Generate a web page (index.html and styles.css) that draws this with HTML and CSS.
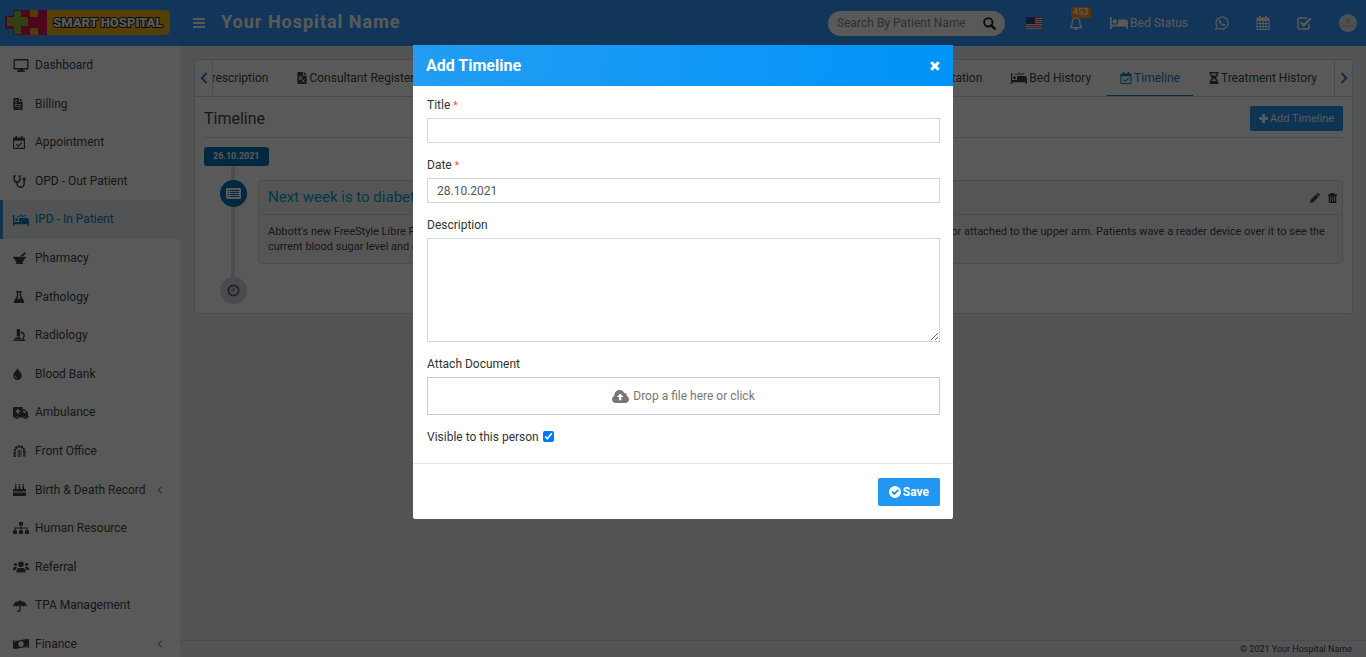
FILE: index.html
```html
<!DOCTYPE html>
<html lang="en">
    <head>
        <meta charset="UTF-8">
        <meta name="viewport" content="width=device-width, initial-scale=1">
        <title>Your Hospital Name</title>
        <link rel="stylesheet" href="styles.css">
    </head>
    <body>
        <!-- icon sprite -->
        <svg class="sprite" aria-hidden="true">
            <symbol id="i-bars" viewBox="0 0 12 12"><path d="M0 1h12v2H0zM0 5h12v2H0zM0 9h12v2H0z"/></symbol>
            <symbol id="i-search" viewBox="0 0 13 13"><circle cx="5.3" cy="5.3" r="4.2" fill="none" stroke="currentColor" stroke-width="1.9"/><path d="M8.3 8.3l3.600 3.600" stroke="currentColor" stroke-width="2.300" stroke-linecap="round"/></symbol>
            <symbol id="i-bell" viewBox="0 0 14 15"><path d="M7 1.800c-2.600 0-3.700 1.900-3.700 4.200 0 3-.8 4.500-2 5.600h11.400c-1.200-1.100-2-2.600-2-5.600 0-2.300-1.100-4.200-3.700-4.200z" fill="none" stroke="currentColor" stroke-width="1.300" stroke-linejoin="round"/><path d="M6.400 0h1.200v2H6.400zM5 12h4a2 2 0 0 1-4 0z"/></symbol>
            <symbol id="i-bed" viewBox="0 0 18 12"><path d="M0 0h1.800v7.400H8V2.400h7.300A2.700 2.700 0 0 1 18 5.100V12h-1.800V9.600H1.800V12H0z"/><circle cx="4.800" cy="4.400" r="2.200"/></symbol>
            <symbol id="i-whatsapp" viewBox="0 0 14 14"><path d="M.9 13.100l.9-3.200A6 6 0 1 1 4.100 12.200z" fill="none" stroke="currentColor" stroke-width="1.300"/><path d="M4.900 3.500c-.9.600-1.100 1.500-.8 2.400.8 2.100 2.300 3.500 4.300 4.200 1 .2 2-.5 2.100-1.600L8.700 7.600l-.8.900C6.900 8.100 6.100 7.300 5.600 6.300l.6-.8z"/></symbol>
            <symbol id="i-calendar" viewBox="0 0 14 14"><path fill-rule="evenodd" d="M3 0h1.800v1.500h4.400V0H11v1.500h1.500c.6 0 1 .4 1 1V13c0 .6-.4 1-1 1h-11c-.6 0-1-.4-1-1V2.500c0-.6.4-1 1-1H3zM1.500 5v2h2.300V5zm3.200 0v2h1.900V5zm2.800 0v2h1.900V5zm2.800 0v2h2.200V5zM1.500 8v2h2.300V8zm3.200 0v2h1.900V8zm2.800 0v2h1.900V8zm2.800 0v2h2.200V8zM1.500 11v2h2.300v-2zm3.200 0v2h1.900v-2zm2.800 0v2h1.900v-2zm2.800 0v2h2.200v-2z"/></symbol>
            <symbol id="i-checksquare" viewBox="0 0 15 14"><path d="M12 8v3.200c0 1-.8 1.800-1.800 1.800H2.800C1.800 13 1 12.200 1 11.200V3.800C1 2.800 1.800 2 2.800 2h7.400" fill="none" stroke="currentColor" stroke-width="1.500"/><path d="M3.800 6.300l3 3L13.600 2.500" fill="none" stroke="currentColor" stroke-width="2.300"/></symbol>
            <symbol id="i-desktop" viewBox="0 0 16 13"><path d="M1.200.7h13.600v9H1.200z" fill="none" stroke="currentColor" stroke-width="1.400" stroke-linejoin="round"/><path d="M6 9.500h4l.4 2H12V13H4v-1.500h1.600z"/></symbol>
            <symbol id="i-file" viewBox="0 0 10 13"><path fill-rule="evenodd" d="M0 1c0-.6.400-1 1-1h5v4h4v8c0 .6-.4 1-1 1H1c-.6 0-1-.4-1-1zM1.600 2v1h2.600V2zm0 2v1h2.600V4zM2 6.500V9.500h6v-3zm.8.8h4.400v1.400H2.800zM5.500 10.700v1H8v-1zM7 0l3 3H7z"/></symbol>
            <symbol id="i-rx" viewBox="0 0 10 13"><path d="M0 1c0-.6.400-1 1-1h5v4h4v8c0 .6-.4 1-1 1H1c-.6 0-1-.4-1-1zM7 0l3 3H7z"/><path d="M2.500 9V4.800h1.700a1.200 1.200 0 0 1 0 2.400H2.500m1.700 0l3.800 4M8 7.800l-3.300 3.400" class="cut"/></symbol>
            <symbol id="i-calcheck" viewBox="0 0 12 13"><path fill-rule="evenodd" d="M2.500 0h1.600v1.500h3.800V0h1.600v1.500h1.200c.7 0 1.300.5 1.300 1.200v9c0 .7-.6 1.300-1.300 1.300H1.300C.6 13 0 12.400 0 11.700v-9c0-.7.6-1.200 1.300-1.200h1.200zM1.200 4.700v7.100h9.600V4.700z"/><path d="M3.400 8.200l1.900 1.900 3.500-3.500" fill="none" stroke="currentColor" stroke-width="1.200"/></symbol>
            <symbol id="i-steth" viewBox="0 0 13 13"><path d="M2.800.9H1.200v3.300a2.900 2.900 0 0 0 5.800 0V.9H5.500M4.100 7.200v1.500a3.500 3.500 0 0 0 7 0V5" fill="none" stroke="currentColor" stroke-width="1.500"/><circle cx="11.100" cy="3.900" r="1.700"/></symbol>
            <symbol id="i-procedure" viewBox="0 0 16 12"><path d="M0 1h1.300v7H6V4h7.200A2.500 2.500 0 0 1 16 6.500V12h-1.400v-1.800H1.300V12H0z"/><circle cx="3.600" cy="5.700" r="1.500"/><path d="M4 2.300h3l1-1.700 1.400 2.700 1-1.500H13" fill="none" stroke="currentColor" stroke-width=".9"/></symbol>
            <symbol id="i-mortar" viewBox="0 0 13 12"><path d="M0 4.700h13v1.400h-1a5.300 5.300 0 0 1-2.600 3.800l.8 2.100H2.800l.8-2.100A5.300 5.300 0 0 1 1 6.100H0zM7 4.200L11.600.3c.8-.4 1.600.5 1 1.200L10 4.200z"/></symbol>
            <symbol id="i-flask" viewBox="0 0 12 13"><path fill-rule="evenodd" d="M3 0h6v1.500h-.7v3.700l3.300 5.800c.5.9-.1 2-1.100 2h-9c-1 0-1.600-1.100-1.100-2l3.300-5.800V1.500H3zm2.200 1.500v4.200L3.900 8h4.200L6.800 5.700V1.500z"/></symbol>
            <symbol id="i-microscope" viewBox="0 0 13 13"><path d="M4 0h2.800v1h.4v6.500H3.500V1H4zM3.700 8.100H7v1.300H3.700zM0 11.500h12.500V13H0z"/><path d="M8 3.800c2 0 3.500 1.500 3.500 3.500 0 1.900-1.200 3.300-2 4.400M1.500 10.200H8" fill="none" stroke="currentColor" stroke-width="1.400"/></symbol>
            <symbol id="i-drop" viewBox="0 0 9 13"><path d="M4.500 0C5.300 2.700 9 4.900 9 8.400a4.500 4.500 0 0 1-9 0C0 4.900 3.700 2.700 4.500 0z"/><path d="M2 8.500c.1 1.400.9 2.200 2.300 2.400" class="cut"/></symbol>
            <symbol id="i-ambulance" viewBox="0 0 16 12"><path fill-rule="evenodd" d="M1 0h8.500v2.300h2L15 5.500v3.700h1v1.200H1a1 1 0 0 1-1-1V1a1 1 0 0 1 1-1zm3.200 2v1.600H2.700v1.500h1.500v1.600h1.500V5.100h1.500V3.600H5.700V2zM10.200 3.300v2.400h3.200l-2.400-2.400z"/><circle cx="4" cy="10" r="1.900"/><circle cx="12.300" cy="10" r="1.900"/><path d="M3.500 9.500h1v1h-1zM11.800 9.500h1v1h-1z" fill="#fff"/></symbol>
            <symbol id="i-gate" viewBox="0 0 13 13"><path d="M1.300 13V6.700a5.200 5.200 0 0 1 10.400 0V13" fill="none" stroke="currentColor" stroke-width="2.600" stroke-dasharray="2.400 .7"/><path d="M4.500 5.500h.9V13h-.9zM6.100 4.800H7V13h-.9zM7.700 5.500h.9V13h-.9z"/></symbol>
            <symbol id="i-cake" viewBox="0 0 13 12"><path d="M2 2h1.500v3H2zM5.700 2h1.500v3H5.700zM9.500 2H11v3H9.500zM2 0h1.300v1.400H2zM5.700 0H7v1.400H5.700zM9.500 0h1.300v1.400H9.500zM1 5h11c.5 0 1 .4 1 1v1c-2 1.500-2.600.5-3.300.1C8.500 8.500 7.300 8.100 6.500 7.100c-1 1.200-2.200 1.200-3.200 0C2 8.200.8 8 0 7V6c0-.6.500-1 1-1zM0 8.300c1.300.7 2.400.6 3.300 0 1 .7 2.200.7 3.200 0 1 .7 2.100.7 3.200 0 1 .6 2 .7 3.300 0V12H0z"/></symbol>
            <symbol id="i-sitemap" viewBox="0 0 16 12"><path d="M6 0h4v3.500H6zM0 8.500h4V12H0zM6 8.500h4V12H6zM12 8.500h4V12h-4zM7.400 3h1.200v6H7.400zM1.400 5.400h13.200V9h-1.200V6.600H2.600V9H1.400z"/></symbol>
            <symbol id="i-users" viewBox="0 0 16 12"><circle cx="8" cy="3.300" r="2.800"/><circle cx="2.500" cy="3.500" r="1.600"/><circle cx="13.500" cy="3.500" r="1.600"/><path d="M3.500 11.500V9.800C3.500 8 4.600 6.900 6 6.900h4c1.400 0 2.500 1.100 2.500 2.900v1.700zM0 8.300C0 6.800.8 6 1.800 6h1.500l.9.700C3.200 7.400 2.900 8.200 2.800 9H0zM16 8.300C16 6.800 15.200 6 14.200 6h-1.500l-.9.700c1 .7 1.300 1.500 1.400 2.300H16z"/></symbol>
            <symbol id="i-umbrella" viewBox="0 0 14 12"><path d="M0 6.500C.5 3.200 3.200 1.200 6.400 1V0h1.200v1c3.200.2 5.900 2.200 6.400 5.500-1.500-1.100-2.800-.9-3.700.2C9 5.300 8.500 5.100 7 6.300 5.500 5.100 5 5.300 3.700 6.700 2.800 5.600 1.500 5.400 0 6.500z"/><path d="M7 5.500v4.700c0 1.500-2.600 1.500-2.600 0" fill="none" stroke="currentColor" stroke-width="1.300"/></symbol>
            <symbol id="i-money" viewBox="0 0 16 12"><path fill-rule="evenodd" d="M0 2c3 1.600 5 .6 8 .1S13.500.3 16 1.200V10c-3-1.600-5-.5-8 0s-5.500 1.500-8 .5zM8 3.300a2.600 2.800 0 1 0 0 5.600 2.600 2.800 0 0 0 0-5.600z"/><path d="M1.200 3.600l1.400.3M14.800 8.300l-1.400-.3" class="cut"/></symbol>
            <symbol id="i-hourglass" viewBox="0 0 10 13"><path fill-rule="evenodd" d="M0 0h10v1.600h-.7c0 2.300-.8 3.900-2.300 4.900 1.500 1 2.300 2.600 2.300 4.900h.7V13H0v-1.600h.7c0-2.300.8-3.900 2.300-4.900C1.500 5.500.7 3.900.7 1.600H0zM2.200 1.600c0 .9.200 1.500.5 2.200h4.600c.3-.7.5-1.300.5-2.200zM5 7.300c-1.200.5-2 1.300-2.400 2.500h4.800C7 8.600 6.200 7.800 5 7.300z"/></symbol>
            <symbol id="i-left" viewBox="0 0 8 12"><path d="M6.500 1L1.800 6l4.700 5" fill="none" stroke="currentColor" stroke-width="2"/></symbol>
            <symbol id="i-right" viewBox="0 0 8 12"><path d="M1.500 1l4.700 5-4.700 5" fill="none" stroke="currentColor" stroke-width="2"/></symbol>
            <symbol id="i-angle" viewBox="0 0 6 8"><path d="M4.500 1L1.300 4l3.200 3" fill="none" stroke="currentColor"/></symbol>
            <symbol id="i-plus" viewBox="0 0 9 9"><path d="M3 0h3v3h3v3H6v3H3V6H0V3h3z"/></symbol>
            <symbol id="i-list" viewBox="0 0 15 11"><path d="M1 0h13a1 1 0 0 1 1 1v9a1 1 0 0 1-1 1H1a1 1 0 0 1-1-1V1a1 1 0 0 1 1-1z"/><path d="M2 2h1v1H2zM4 2h9v1H4zM2 4h1v1H2zM4 4h9v1H4zM2 6h1v1H2zM4 6h9v1H4zM2 8h1v1H2zM4 8h9v1H4z" fill="#0073b7"/></symbol>
            <symbol id="i-clock" viewBox="0 0 13 13"><circle cx="6.500" cy="6.500" r="5.200" fill="none" stroke="currentColor" stroke-width="1.800"/><path d="M6.800 3.500v3.300H4.200" fill="none" stroke="currentColor" stroke-width="1.100"/></symbol>
            <symbol id="i-pencil" viewBox="0 0 10 10"><path d="M0 10l.7-3.100L6 1.600 8.400 4 3.100 9.300zM6.600 1L7.400.3c.4-.4.900-.4 1.200 0l1.100 1.100c.4.3.4.8 0 1.200l-.7.800z"/></symbol>
            <symbol id="i-trash" viewBox="0 0 9 10"><path fill-rule="evenodd" d="M3 0h3l.6 1.300H9v1.200h-.7V9c0 .6-.4 1-1 1H1.700c-.6 0-1-.4-1-1V2.500H0V1.300h2.400zM2.200 3.500v5h.7v-5zm2 0v5h.7v-5zm2 0v5h.7v-5z"/></symbol>
            <symbol id="i-times" viewBox="0 0 10 10"><path d="M1.300 1.300l7.400 7.400M8.700 1.300L1.300 8.700" stroke="currentColor" stroke-width="3"/></symbol>
            <symbol id="i-cloud" viewBox="0 0 17 13"><path fill-rule="evenodd" d="M4 13C1.700 13 0 11.400 0 9.300 0 7.700 1 6.400 2.300 5.800 2.100 2.600 4.500 0 7.500 0c2.100 0 3.900 1.200 4.700 2.900 1.700-.2 3.100 1.300 2.600 3C16.200 6.500 17 7.900 17 9.400c0 2-1.600 3.600-3.600 3.600zM8.200 3.600L4.900 7h2.200v3.300h2.200V7h2.200z"/></symbol>
            <symbol id="i-checkcircle" viewBox="0 0 12 12"><path fill-rule="evenodd" d="M6 0a6 6 0 1 1 0 12A6 6 0 0 1 6 0zM2.300 6.300l3 2.900 4.700-4.600-1.300-1.300L5.300 6.600 3.600 5z"/></symbol>
        </svg>

        <header class="topbar">
            <a class="logo" href="#">
                <svg width="166" height="26" viewBox="0 0 166 26">
                    <rect x="30" y="0" width="135" height="25" rx="5" fill="#f9b30b"/>
                    <path d="M8 0h34v25H8v-6H0V6h8z" fill="#e0125a"/>
                    <path d="M9 1h7v6h7v9h-7v8H9v-8H2V7h7z" fill="#8fb83a"/>
                    <path d="M25 0h8v7h-8zM25 18h8v7h-8z" fill="#f9a70b"/>
                    <text class="logo-text" x="48" y="17">SMART HOSPITAL</text>
                </svg>
            </a>
            <button class="toggle" type="button" aria-label="Toggle menu"><svg class="icon" width="12" height="12"><use href="#i-bars"/></svg></button>
            <span class="hospital">Your Hospital Name</span>
            <form class="search">
                <input type="text" placeholder="Search By Patient Name" aria-label="Search By Patient Name">
                <button type="submit" aria-label="Search"><svg class="icon" width="13" height="13"><use href="#i-search"/></svg></button>
            </form>
            <nav class="tools">
                <a href="#" aria-label="Language">
                    <svg width="16" height="12" viewBox="0 0 16 12">
                        <path d="M0 0h16v12H0z" fill="#eee"/>
                        <path d="M0 0h16v1H0zM0 2h16v1H0zM0 4h16v1H0zM0 6h16v1H0zM0 8h16v1H0zM0 10h16v1H0z" fill="#d8424c"/>
                        <path d="M0 0h9v7H0z" fill="#34477e"/>
                    </svg>
                </a>
                <a class="bell" href="#" aria-label="Notifications"><svg class="icon" width="14" height="15"><use href="#i-bell"/></svg><span class="badge">453</span></a>
                <a class="beds" href="#"><svg class="icon" width="18" height="12"><use href="#i-bed"/></svg>Bed Status</a>
                <a href="#" aria-label="Chat"><svg class="icon" width="14" height="14"><use href="#i-whatsapp"/></svg></a>
                <a href="#" aria-label="Calendar"><svg class="icon" width="14" height="14"><use href="#i-calendar"/></svg></a>
                <a href="#" aria-label="Tasks"><svg class="icon" width="15" height="14"><use href="#i-checksquare"/></svg></a>
                <a href="#" aria-label="Profile">
                    <svg width="18" height="18" viewBox="0 0 18 18"><circle cx="9" cy="9" r="9" fill="#e4e4e4"/><circle cx="9" cy="7" r="2.500" fill="#c4c4c4"/><path d="M3 11h12v2H3z" fill="#cfcfcf"/></svg>
                </a>
            </nav>
        </header>

        <div class="wrapper">
            <aside class="sidebar">
                <ul class="menu">
                    <li><a href="#"><span><svg class="icon" width="16" height="13"><use href="#i-desktop"/></svg></span>Dashboard</a></li>
                    <li><a href="#"><span><svg class="icon" width="10" height="12"><use href="#i-file"/></svg></span>Billing</a></li>
                    <li><a href="#"><span><svg class="icon" width="12" height="13"><use href="#i-calcheck"/></svg></span>Appointment</a></li>
                    <li><a href="#"><span><svg class="icon" width="13" height="13"><use href="#i-steth"/></svg></span>OPD - Out Patient</a></li>
                    <li class="active"><a href="#"><span><svg class="icon" width="16" height="12"><use href="#i-procedure"/></svg></span>IPD - In Patient</a></li>
                    <li><a href="#"><span><svg class="icon" width="13" height="12"><use href="#i-mortar"/></svg></span>Pharmacy</a></li>
                    <li><a href="#"><span><svg class="icon" width="12" height="12"><use href="#i-flask"/></svg></span>Pathology</a></li>
                    <li><a href="#"><span><svg class="icon" width="13" height="12"><use href="#i-microscope"/></svg></span>Radiology</a></li>
                    <li><a href="#"><span><svg class="icon" width="9" height="12"><use href="#i-drop"/></svg></span>Blood Bank</a></li>
                    <li><a href="#"><span><svg class="icon" width="16" height="12"><use href="#i-ambulance"/></svg></span>Ambulance</a></li>
                    <li><a href="#"><span><svg class="icon" width="13" height="12"><use href="#i-gate"/></svg></span>Front Office</a></li>
                    <li><a href="#"><span><svg class="icon" width="13" height="12"><use href="#i-cake"/></svg></span>Birth &amp; Death Record<svg class="icon angle" width="6" height="8"><use href="#i-angle"/></svg></a></li>
                    <li><a href="#"><span><svg class="icon" width="16" height="12"><use href="#i-sitemap"/></svg></span>Human Resource</a></li>
                    <li><a href="#"><span><svg class="icon" width="16" height="12"><use href="#i-users"/></svg></span>Referral</a></li>
                    <li><a href="#"><span><svg class="icon" width="14" height="12"><use href="#i-umbrella"/></svg></span>TPA Management</a></li>
                    <li><a href="#"><span><svg class="icon" width="16" height="12"><use href="#i-money"/></svg></span>Finance<svg class="icon angle" width="6" height="8"><use href="#i-angle"/></svg></a></li>
                </ul>
            </aside>

            <div class="content">
                <main class="box">
                    <div class="tabs">
                        <button class="scroll" type="button" aria-label="Previous tabs"><svg class="icon" width="8" height="12"><use href="#i-left"/></svg></button>
                        <nav class="tablist">
                            <div class="tabgroup first">
                                <a href="#">Prescription</a>
                                <a href="#"><svg class="icon" width="10" height="12"><use href="#i-rx"/></svg>Consultant Register</a>
                            </div>
                            <div class="tabgroup">
                                <a href="#">Live Consultation</a>
                                <a href="#"><svg class="icon" width="16" height="12"><use href="#i-procedure"/></svg>Bed History</a>
                                <a class="active" href="#"><svg class="icon" width="12" height="12"><use href="#i-calcheck"/></svg>Timeline</a>
                                <a href="#"><svg class="icon" width="10" height="12"><use href="#i-hourglass"/></svg>Treatment History</a>
                            </div>
                        </nav>
                        <button class="scroll next" type="button" aria-label="Next tabs"><svg class="icon" width="8" height="12"><use href="#i-right"/></svg></button>
                    </div>
                    <div class="pane">
                        <div class="pane-head">
                            <h3>Timeline</h3>
                            <button class="btn small" type="button"><svg class="icon" width="9" height="9"><use href="#i-plus"/></svg>Add Timeline</button>
                        </div>
                        <ul class="timeline">
                            <li class="day"><span class="date">26.10.2021</span></li>
                            <li class="entry">
                                <span class="dot"><svg class="icon" width="15" height="11"><use href="#i-list"/></svg></span>
                                <article class="card">
                                    <div class="card-head">
                                        <h4>Next week is to diabetic checkup</h4>
                                        <a href="#" aria-label="Edit"><svg class="icon" width="10" height="10"><use href="#i-pencil"/></svg></a>
                                        <a href="#" aria-label="Delete"><svg class="icon" width="9" height="10"><use href="#i-trash"/></svg></a>
                                    </div>
                                    <p>Abbott's new FreeStyle Libre Flash Glucose Monitoring System approved Wednesday by the Food and Drug Administration uses a small sensor attached to the upper arm. Patients wave a reader device over it to see the current blood sugar level and changes over the past eight hours.</p>
                                </article>
                            </li>
                            <li class="entry"><span class="dot end"><svg class="icon" width="13" height="13"><use href="#i-clock"/></svg></span></li>
                        </ul>
                    </div>
                </main>
                <footer class="footer">© 2021 Your Hospital Name</footer>
            </div>
        </div>

        <div class="backdrop">
            <form class="modal" role="dialog" aria-labelledby="modal-title">
                <div class="modal-head">
                    <h2 id="modal-title">Add Timeline</h2>
                    <button type="button" aria-label="Close"><svg class="icon" width="10" height="10"><use href="#i-times"/></svg></button>
                </div>
                <div class="modal-body">
                    <div class="field">
                        <label for="title">Title <small>*</small></label>
                        <input id="title" type="text">
                    </div>
                    <div class="field">
                        <label for="date">Date <small>*</small></label>
                        <input id="date" type="text" value="28.10.2021">
                    </div>
                    <div class="field">
                        <label for="description">Description</label>
                        <textarea id="description"></textarea>
                    </div>
                    <div class="field">
                        <label for="document">Attach Document</label>
                        <label class="drop" for="document"><svg class="icon" width="17" height="13"><use href="#i-cloud"/></svg>Drop a file here or click</label>
                        <input id="document" type="file" hidden>
                    </div>
                    <div class="check">
                        <label for="visible">Visible to this person</label>
                        <input id="visible" type="checkbox" checked>
                    </div>
                </div>
                <div class="modal-foot">
                    <button class="btn" type="submit"><svg class="icon" width="12" height="12"><use href="#i-checkcircle"/></svg>Save</button>
                </div>
            </form>
        </div>
    </body>
</html>
```
FILE: styles.css
```css
* {
    box-sizing: border-box;
}
body {
    margin: 0;
    height: 100vh;
    display: flex;
    flex-direction: column;
    overflow: hidden;
    background-color: #ecf0f5;
    color: #444;
    font: 12px/17px Roboto, "Liberation Sans", sans-serif;
}
a {
    color: inherit;
    text-decoration: none;
}
h2, h3, h4, p, ul {
    margin: 0;
    padding: 0;
    font-weight: 400;
}
ul {
    list-style: none;
}
button, input, textarea {
    font: inherit;
}
button {
    padding: 0;
    border: 0;
    background: none;
    color: inherit;
}
.sprite {
    display: none;
}
.icon {
    fill: currentColor;
    flex: none;
}
.cut {
    fill: none;
    stroke: #fff;
}

/* top bar */
.topbar {
    flex: none;
    display: flex;
    align-items: center;
    height: 46px;
    padding: 0 9px 0 5px;
    background-color: #369cff;
    color: #fff;
}
.logo, .tools a {
    display: flex;
    align-items: center;
}
.logo-text {
    font: 900 13px Roboto, sans-serif;
    fill: #fff;
    stroke: #222;
    stroke-width: 2px;
    paint-order: stroke;
}
.toggle {
    display: flex;
    margin: 0 16px 0 22px;
}
.hospital {
    flex: 1;
    padding-bottom: 3px;
    font-size: 18px;
    font-weight: 700;
    letter-spacing: 1px;
}
.search {
    display: flex;
    align-items: center;
    width: 177px;
    height: 25px;
    padding: 0 9px;
    border-radius: 13px;
    background-color: #fff;
    color: #222;
}
.search input {
    width: 128px;
    padding: 0;
    border: 0;
    background: none;
}
.search input::placeholder {
    color: #888;
}
.search button {
    display: flex;
    margin-left: auto;
}
.tools {
    display: flex;
    align-items: center;
    gap: 27px;
    margin-left: 21px;
}
.tools .beds {
    gap: 2px;
}
.bell {
    position: relative;
}
.badge {
    position: absolute;
    top: -9px;
    left: 2px;
    padding: 0 2px;
    border-radius: 2px;
    background-color: #ff9800;
    font-size: 9px;
    line-height: 11px;
    font-weight: 700;
}

/* side menu */
.wrapper {
    flex: 1;
    min-height: 0;
    display: flex;
}
.sidebar {
    flex: none;
    width: 180px;
    overflow: hidden;
    background-color: #fff;
}
.menu a {
    display: flex;
    align-items: center;
    padding: 10px 17px 10px 10px;
    border-left: 3px solid transparent;
    line-height: 1.55;
}
.menu span {
    display: flex;
    width: 22px;
}
.menu .active a {
    border-color: #2196f3;
    background-color: #e9edf2;
    color: #0084b4;
}
.angle {
    margin-left: auto;
}

/* content */
.content {
    flex: 1;
    min-width: 0;
    display: flex;
    flex-direction: column;
    justify-content: space-between;
}
.box {
    margin: 13px 13px 0 14px;
    border: 1px solid #cfdcdf;
    border-radius: 3px;
    background-color: #fff;
}
.tabs {
    display: flex;
    height: 37px;
    border-bottom: 1px solid #d2d6de;
}
.scroll {
    flex: none;
    display: flex;
    align-items: center;
    justify-content: center;
    width: 18px;
    border-right: 1px solid #d2d6de;
    color: #2f7fc4;
}
.scroll.next {
    border-right: 0;
    border-left: 1px solid #d2d6de;
}
.tablist {
    flex: 1;
    min-width: 0;
    display: flex;
    justify-content: space-between;
    overflow: hidden;
}
.tabgroup {
    display: flex;
    gap: 3px;
    padding-right: 4px;
}
.tabgroup.first {
    margin-left: -22px;
}
.tabgroup a {
    display: flex;
    align-items: center;
    gap: 2px;
    padding: 0 13px;
    border-bottom: 1px solid transparent;
    border-top: 1px solid transparent;
    white-space: nowrap;
}
.tabgroup .active {
    border-bottom-color: #0084b4;
    color: #0084d4;
}
.pane {
    padding: 9px;
}
.pane-head {
    display: flex;
    align-items: center;
    justify-content: space-between;
    padding-bottom: 6px;
    border-bottom: 1px solid #ddd;
}
.pane-head h3 {
    font-size: 16px;
}
.btn {
    display: flex;
    align-items: center;
    gap: 2px;
    height: 28px;
    padding: 0 11px;
    border-radius: 2px;
    background-color: #2196f3;
    color: #fff;
    font-weight: 700;
}
.btn.small {
    height: 25px;
    padding: 0 9px;
    font-size: 11px;
    font-weight: 400;
}
.timeline {
    padding-top: 9px;
    background: linear-gradient(#ddd, #ddd) 27px 9px / 4px 130px no-repeat;
}
.day {
    height: 20px;
}
.date {
    display: inline-block;
    padding: 0 9px;
    border-radius: 3px;
    background-color: #0073b7;
    color: #fff;
    font-size: 9px;
    font-weight: 700;
    line-height: 19px;
}
.entry {
    display: flex;
    align-items: flex-start;
    gap: 11px;
    margin-top: 13px;
    padding-left: 16px;
}
.dot {
    flex: none;
    display: flex;
    align-items: center;
    justify-content: center;
    width: 27px;
    height: 27px;
    border-radius: 50%;
    background-color: #0073b7;
    color: #fff;
}
.dot.end {
    background-color: #d2d6de;
    color: #666;
}
.card {
    flex: 1;
    border: 1px solid #ddd;
    border-radius: 3px;
    background-color: #f4f4f4;
}
.card-head {
    display: flex;
    align-items: center;
    gap: 8px;
    height: 34px;
    padding: 0 5px 0 9px;
    border-bottom: 1px solid #ddd;
}
.card-head h4 {
    flex: 1;
    color: #00a7d0;
    font-size: 15px;
}
.card-head a {
    display: flex;
}
.card p {
    padding: 9px;
    font-size: 11px;
    line-height: 15px;
}
.footer {
    padding: 0 14px;
    border-top: 1px solid #d2d6de;
    font-size: 9px;
    line-height: 16px;
    text-align: right;
}

/* dialog */
.backdrop {
    position: fixed;
    inset: 0;
    padding-top: 45px;
    background-color: rgba(0, 0, 0, .65);
}
.modal {
    width: 540px;
    max-width: 100%;
    margin: 0 auto;
    border-radius: 2px;
    background-color: #fff;
    color: #333;
    overflow: hidden;
}
.modal-head {
    display: flex;
    align-items: center;
    justify-content: space-between;
    height: 41px;
    padding: 0 13px;
    background: linear-gradient(100deg, #239df3, #0093f8);
    color: #fff;
}
.modal-head h2 {
    font-size: 16px;
    font-weight: 700;
}
.modal-head button {
    display: flex;
}
.modal-body {
    padding: 11px 13px 17px 14px;
}
.field {
    display: flex;
    flex-direction: column;
    gap: 4px;
    margin-bottom: 14px;
}
.field small {
    color: #f44;
    font-size: 10px;
    line-height: 10px;
}
.field input, .field textarea {
    height: 25px;
    padding: 0 9px;
    border: 1px solid #d2d6de;
    outline: 0;
    color: #555;
}
.field textarea {
    height: 104px;
}
.drop {
    display: flex;
    align-items: center;
    justify-content: center;
    gap: 4px;
    height: 38px;
    border: 1px solid #ccc;
    color: #777;
}
.check {
    display: flex;
    align-items: flex-start;
    gap: 4px;
}
.check input {
    width: 11px;
    height: 11px;
    margin: 2px 0;
}
.modal-foot {
    display: flex;
    justify-content: flex-end;
    padding: 14px 13px 13px;
    border-top: 1px solid #e5e5e5;
}
```
